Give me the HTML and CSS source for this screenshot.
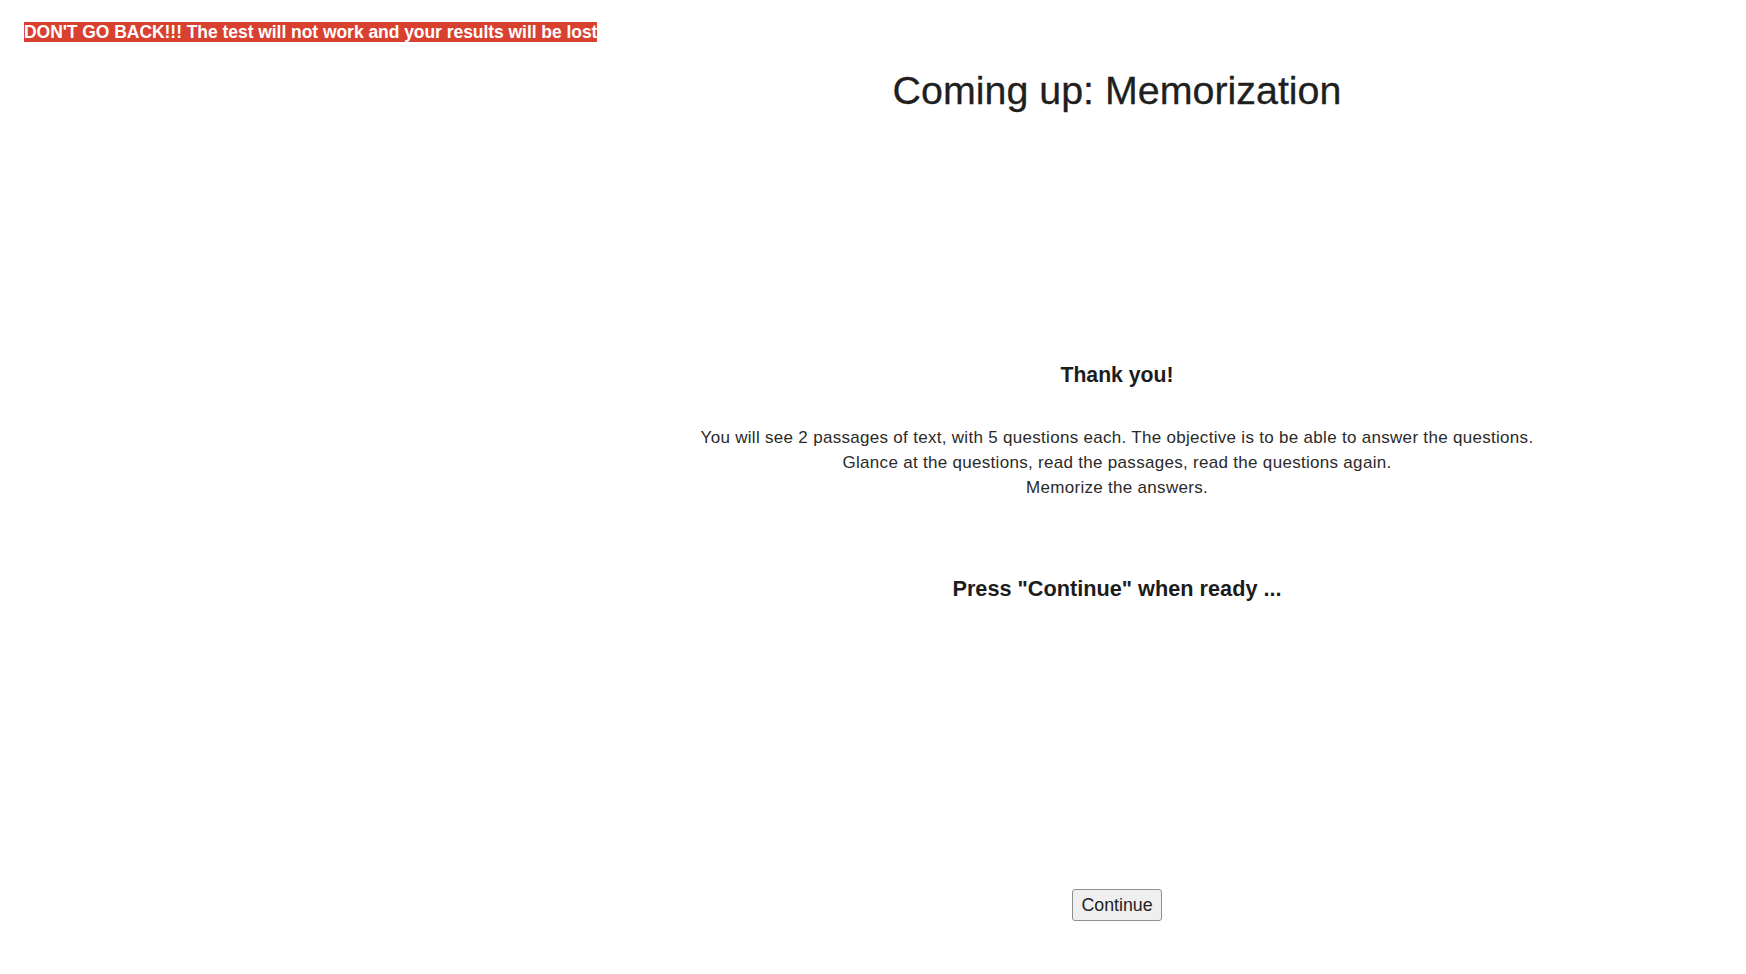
FILE: index.html
```html
<!DOCTYPE html>
<html lang="en">
<head>
<meta charset="utf-8">
<title>Coming up: Memorization</title>
<link rel="stylesheet" href="styles.css">
</head>
<body>
<div class="page">
  <aside class="side">
    <span class="warning">DON'T GO BACK!!! The test will not work and your results will be lost</span>
  </aside>
  <main class="content">
    <h1 class="title">Coming up: Memorization</h1>
    <h2 class="thanks">Thank you!</h2>
    <p class="intro">You will see 2 passages of text, with 5 questions each. The objective is to be able to answer the questions.<br>Glance at the questions, read the passages, read the questions again.<br>Memorize the answers.</p>
    <h3 class="prompt">Press "Continue" when ready ...</h3>
    <button class="continue" type="button">Continue</button>
  </main>
</div>
</body>
</html>
```

FILE: styles.css
```css
html, body {
  margin: 0;
  padding: 0;
  background: #ffffff;
}

body {
  font-family: "Liberation Sans", Arial, Helvetica, sans-serif;
  color: #222222;
}

.page {
  display: grid;
  grid-template-columns: 488px 1fr;
  min-height: 974px;
}

.side {
  padding: 22px 0 0 24px;
}

.warning {
  display: inline-block;
  background: #d8412f;
  color: #ffffff;
  font-weight: bold;
  font-size: 17.5px;
  line-height: 20px;
  height: 20px;
  white-space: nowrap;
  letter-spacing: -0.05px;
}

.content {
  display: flex;
  flex-direction: column;
  align-items: center;
  text-align: center;
}

.title {
  margin: 68px 0 0;
  font-size: 39.4px;
  font-weight: normal;
  line-height: 45px;
  color: #1f1f1f;
  -webkit-text-stroke: 0.3px #1f1f1f;
}

.thanks {
  margin: 250px 0 0;
  font-size: 21.2px;
  font-weight: bold;
  line-height: 24px;
  color: #1c1c1c;
}

.intro {
  margin: 38px 0 0;
  font-size: 17px;
  line-height: 25px;
  letter-spacing: 0.3px;
  color: #2a2a2a;
}

.prompt {
  margin: 76px 0 0;
  font-size: 21.7px;
  font-weight: bold;
  line-height: 25px;
  color: #1c1c1c;
}

.continue {
  margin-top: 288px;
  width: 90px;
  height: 32px;
  padding: 0;
  font-family: "Liberation Sans", Arial, Helvetica, sans-serif;
  font-size: 17.8px;
  color: #222222;
  background: #efefef;
  border: 1px solid #8f8f8f;
  border-radius: 3px;
}
```
